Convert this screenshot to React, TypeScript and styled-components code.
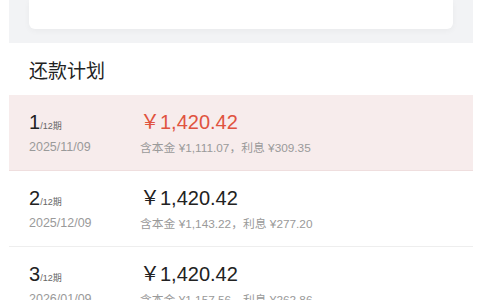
import styled, { createGlobalStyle } from "styled-components";

const GlobalStyle = createGlobalStyle`
    body {
        margin: 0;
        background: #ffffff;
        font-family: "Liberation Sans", "Noto Sans CJK SC", sans-serif;
    }
`;

const Page = styled.div`
    width: 464px;
    margin-left: 9px;
    background: #ffffff;
`;

const TopArea = styled.div`
    height: 43px;
    padding: 0 20px;
    background: #f2f3f5;
    box-sizing: border-box;
`;

const Card = styled.div`
    height: 29px;
    background: #ffffff;
    border-radius: 0 0 6px 6px;
    box-shadow: 0 2px 6px rgba(0, 0, 0, 0.04);
`;

const SectionHeader = styled.div`
    height: 52px;
    display: flex;
    align-items: center;
    padding: 0 20px;
    font-family: "Noto Sans CJK SC", sans-serif;
    font-size: 19px;
    color: #222222;
`;

const Row = styled.div<{ $current?: boolean }>`
    height: 76px;
    box-sizing: border-box;
    padding: 0 20px;
    display: flex;
    align-items: center;
    background: ${(p) => (p.$current ? "#f7ecec" : "#ffffff")};
    border-bottom: 1px solid ${(p) => (p.$current ? "#efdede" : "#eeeeee")};
`;

const Left = styled.div`
    width: 111px;
    display: flex;
    flex-direction: column;
    gap: 5px;
`;

const Right = styled.div`
    display: flex;
    flex-direction: column;
    gap: 4px;
`;

const Period = styled.div`
    display: flex;
    align-items: baseline;
    color: #222222;
    height: 24px;
`;

const PeriodNum = styled.span`
    font-size: 20px;
`;

const PeriodTotal = styled.span`
    font-size: 9px;
    color: #666666;
`;

const DateText = styled.div`
    font-size: 12.5px;
    color: #9a9a9a;
`;

const Amount = styled.div<{ $current?: boolean }>`
    font-size: 20px;
    height: 24px;
    line-height: 24px;
    color: ${(p) => (p.$current ? "#e0533f" : "#222222")};
`;

const Detail = styled.div`
    font-size: 11.8px;
    color: #9a9a9a;
`;

type Plan = { no: number; date: string; principal: string; interest: string };

const plans: Plan[] = [
    { no: 1, date: "2025/11/09", principal: "1,111.07", interest: "309.35" },
    { no: 2, date: "2025/12/09", principal: "1,143.22", interest: "277.20" },
    { no: 3, date: "2026/01/09", principal: "1,157.56", interest: "262.86" },
];

export default function App() {
    return (
        <>
            <GlobalStyle />
            <Page>
                <TopArea>
                    <Card />
                </TopArea>
                <SectionHeader>还款计划</SectionHeader>
                {plans.map((p) => (
                    <Row key={p.no} $current={p.no === 1}>
                        <Left>
                            <Period>
                                <PeriodNum>{p.no}</PeriodNum>
                                <PeriodTotal>/12期</PeriodTotal>
                            </Period>
                            <DateText>{p.date}</DateText>
                        </Left>
                        <Right>
                            <Amount $current={p.no === 1}>￥1,420.42</Amount>
                            <Detail>
                                含本金 ¥{p.principal}，利息 ¥{p.interest}
                            </Detail>
                        </Right>
                    </Row>
                ))}
            </Page>
        </>
    );
}
